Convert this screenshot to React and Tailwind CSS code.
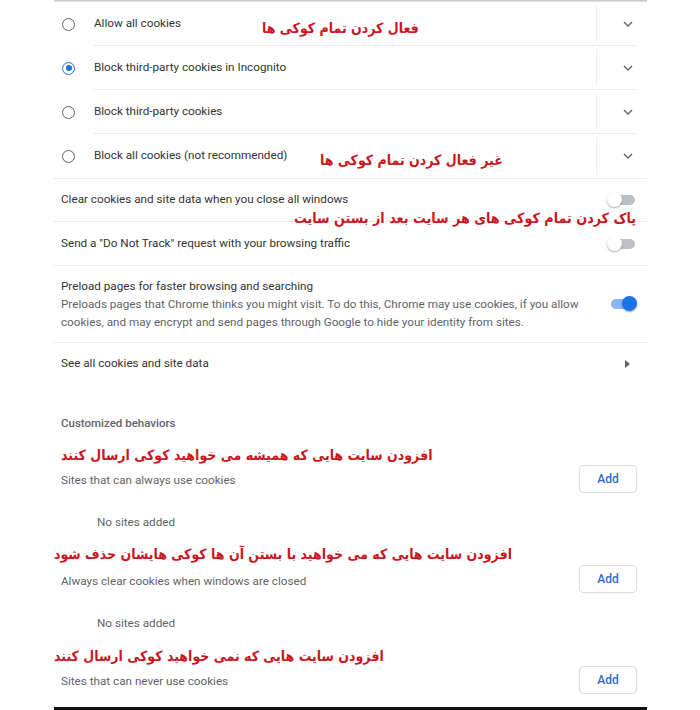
import React from 'react';

const fa = { fontFamily: '"DejaVu Sans Condensed", "DejaVu Sans", sans-serif' };
const en = { fontFamily: 'Roboto, "Liberation Sans", sans-serif' };

function Radio({ checked }) {
  return (
    <div
      className={
        'w-[13px] h-[13px] rounded-full border-[1.5px] flex items-center justify-center ' +
        (checked ? 'border-[#1a73e8]' : 'border-[#5f6368]')
      }
    >
      {checked && <div className="w-[6px] h-[6px] rounded-full bg-[#1a73e8]" />}
    </div>
  );
}

function Chevron() {
  return (
    <svg width="10" height="6" viewBox="0 0 10 6" fill="none">
      <path d="M1 1l4 4 4-4" stroke="#5f6368" strokeWidth="1.4" />
    </svg>
  );
}

function Toggle({ on }) {
  return (
    <div className="relative w-[28px] h-[16px] flex items-center">
      <div className={'w-[26px] h-[10px] rounded-full ml-[2px] ' + (on ? 'bg-[#8ab4f8]' : 'bg-[#bdc1c6]')} />
      <div
        className={
          'absolute top-0 w-[15px] h-[15px] rounded-full shadow-[0_1px_2px_rgba(0,0,0,0.35)] ' +
          (on ? 'right-0 bg-[#1a73e8]' : 'left-0 bg-white')
        }
      />
    </div>
  );
}

function Note({ children, className }) {
  return (
    <span dir="rtl" style={fa} className={'text-[#cc151c] font-bold leading-none whitespace-nowrap ' + (className || 'text-[14px]')}>
      {children}
    </span>
  );
}

function RadioRow({ label, checked, last, note }) {
  return (
    <div className="relative h-[44px] flex items-stretch">
      <div className="w-[40px] flex items-center pl-[8px]">
        <Radio checked={checked} />
      </div>
      <div className={'flex-1 flex items-stretch ' + (last ? '' : 'border-b border-[#e8eaed] mr-[12px]')}>
        <div className="flex-1 flex items-center text-[11.7px] text-[#333]" style={en}>{label}</div>
        <div className="flex items-stretch py-[3px]">
          <div className="w-px bg-[#eeeeee]" />
        </div>
        <div className={'flex items-center justify-end ' + (last ? 'w-[50px] pr-[14px]' : 'w-[38px] pr-[2px]')}>
          <Chevron />
        </div>
      </div>
      {note}
    </div>
  );
}

function AddRow({ label, labelClass }) {
  return (
    <div className="h-[28px] flex items-center justify-between pl-[7px] pr-[10px]">
      <span className={'text-[11.7px] text-[#5f6368] ' + (labelClass || '')} style={en}>{label}</span>
      <button className="w-[58px] h-[28px] rounded-[4px] border border-[#dadce0] text-[12px] font-medium text-[#3367d6]" style={en}>
        Add
      </button>
    </div>
  );
}

export default function App() {
  return (
    <div className="w-[700px] h-[710px] bg-white overflow-hidden">
      <div className="relative ml-[54px] w-[593px]">
        <div className="h-[2px] bg-gradient-to-b from-[#bdbdbd] to-[#eeeeee]" />

        <RadioRow
          label="Allow all cookies"
          note={<div className="absolute left-[208px] top-[13px]"><Note>فعال کردن تمام کوکی ها</Note></div>}
        />
        <RadioRow label="Block third-party cookies in Incognito" checked />
        <RadioRow label="Block third-party cookies" />
        <RadioRow
          label="Block all cookies (not recommended)"
          last
          note={<div className="absolute left-[266px] top-[13px]"><Note>غیر فعال کردن تمام کوکی ها</Note></div>}
        />

        <div className="border-t border-[#e8eaed]" />

        <div className="h-[43px] flex items-center justify-between pl-[7px] pr-[12px] border-b border-[#e8eaed]">
          <span className="text-[11.7px] text-[#333]" style={en}>Clear cookies and site data when you close all windows</span>
          <Toggle />
        </div>
        <div className="absolute left-[240px] top-[205px]"><Note className="text-[14.2px]">پاک کردن تمام کوکی های هر سایت بعد از بستن سایت</Note></div>

        <div className="h-[44px] flex items-center justify-between pl-[7px] pr-[12px] border-b border-[#e8eaed]">
          <span className="text-[11.7px] text-[#333]" style={en}>Send a "Do Not Track" request with your browsing traffic</span>
          <Toggle />
        </div>

        <div className="h-[77px] flex items-center justify-between pl-[7px] pr-[10px] border-b border-[#e8eaed]">
          <div className="flex flex-col" style={en}>
            <span className="text-[11.7px] leading-[18px] text-[#333]">Preload pages for faster browsing and searching</span>
            <span className="text-[11.7px] leading-[18px] text-[#5f6368] w-[540px]">
              Preloads pages that Chrome thinks you might visit. To do this, Chrome may use cookies, if you allow cookies, and may encrypt and send pages through Google to hide your identity from sites.
            </span>
          </div>
          <Toggle on />
        </div>

        <div className="h-[42px] flex items-center justify-between pl-[7px] pr-[17px]">
          <span className="text-[11.7px] text-[#333]" style={en}>See all cookies and site data</span>
          <svg width="5" height="8" viewBox="0 0 5 8"><path d="M0 0l5 4-5 4z" fill="#5f6368" /></svg>
        </div>

        <div className="mt-[27px] h-[24px] flex items-center pl-[7px]">
          <span className="text-[11.5px] font-medium text-[#5f6368]" style={en}>Customized behaviors</span>
        </div>

        <div className="mt-[9px] h-[20px] flex items-center pl-[7px]">
          <Note className="text-[14px]">افزودن سایت هایی که همیشه می خواهید کوکی ارسال کنند</Note>
        </div>
        <AddRow label="Sites that can always use cookies" labelClass="mt-[4px]" />
        <div className="mt-[20px] h-[20px] flex items-center pl-[43px]">
          <span className="text-[11.7px] text-[#5f6368]" style={en}>No sites added</span>
        </div>

        <div className="mt-[10px] h-[22px] flex items-center">
          <Note className="text-[14px]">افزودن سایت هایی که می خواهید با بستن آن ها کوکی هایشان حذف شود</Note>
        </div>
        <AddRow label="Always clear cookies when windows are closed" labelClass="mt-[6px]" />
        <div className="mt-[21px] h-[20px] flex items-center pl-[43px]">
          <span className="text-[11.7px] text-[#5f6368]" style={en}>No sites added</span>
        </div>

        <div className="mt-[12px] h-[20px] flex items-center">
          <Note className="text-[14px]">افزودن سایت هایی که نمی خواهید کوکی ارسال کنند</Note>
        </div>
        <AddRow label="Sites that can never use cookies" labelClass="mt-[4px]" />

        <div className="mt-[13px] h-[3px] bg-[#111]" />
      </div>
    </div>
  );
}
